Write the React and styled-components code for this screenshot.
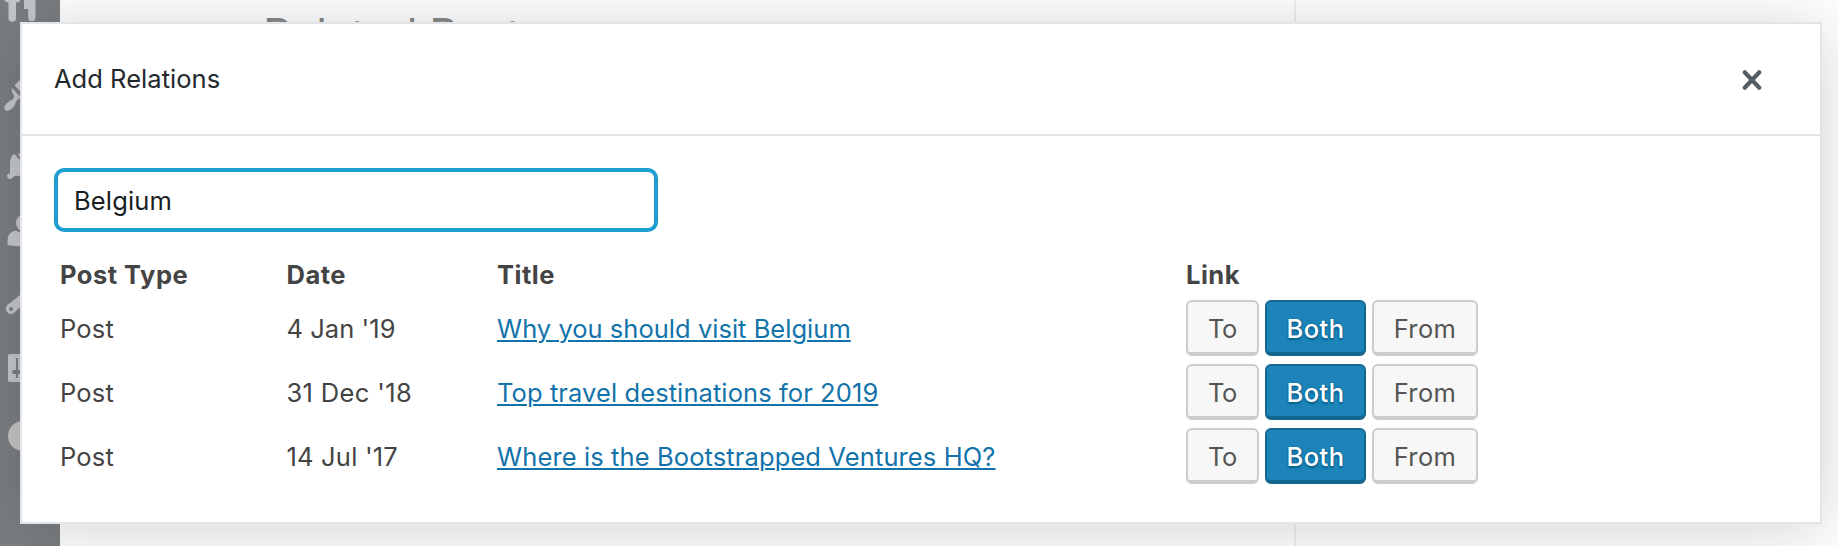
import React from "react";
import styled, { createGlobalStyle } from "styled-components";

const GlobalStyle = createGlobalStyle`
  *, *::before, *::after { box-sizing: border-box; }
  body {
    margin: 0;
    overflow: hidden;
    background: #fff;
    color: #444;
    font-family: Inter, "Liberation Sans", sans-serif;
    font-size: 25.5px;
  }
`;

const Screen = styled.div`
  position: relative;
  display: flex;
  height: 546px;
  overflow: hidden;
`;

const AdminMenu = styled.nav`
  display: flex;
  flex-direction: column;
  width: 60px;
  background: #7b7e81;
`;

const MenuIcon = styled.svg`
  display: block;
  flex: none;
  width: 40px;
  height: ${({ $height }) => $height}px;
  margin-bottom: ${({ $gap }) => $gap}px;
  fill: ${({ $tone }) => $tone || "#c4c7ca"};
`;

const Editor = styled.main`
  flex: none;
  width: 1236px;
  padding: 8px 0 0 203px;
  border-right: 2px solid #eeeff1;
`;

const MetaboxTitle = styled.h1`
  margin: 0;
  color: #878787;
  font-size: 44.5px;
  font-weight: 400;
  line-height: 54px;
  letter-spacing: -0.4px;
`;

const Modal = styled.section`
  position: absolute;
  top: 22px;
  left: 20px;
  display: flex;
  flex-direction: column;
  width: 1802px;
  height: 502px;
  border: 2px solid #e2e4e7;
  background: #fff;
  box-shadow: 0 6px 60px rgba(25, 30, 35, 0.2);
`;

const ModalHeader = styled.header`
  display: flex;
  align-items: center;
  justify-content: space-between;
  height: 112px;
  padding: 0 56px 0 32px;
  border-bottom: 2px solid #e2e4e7;
`;

const ModalTitle = styled.h2`
  margin: 0;
  padding-bottom: 2px;
  color: #23282d;
  font-size: 25.5px;
  font-weight: 400;
  letter-spacing: 0.03px;
`;

const CloseButton = styled.button`
  width: 24px;
  height: 24px;
  margin-top: 2px;
  padding: 0;
  border: 0;
  background: none;

  svg {
    display: block;
    stroke: #555d66;
    stroke-width: 4.2;
    stroke-linecap: round;
  }
`;

const ModalBody = styled.div`
  padding: 32px;
`;

const SearchInput = styled.input`
  display: block;
  width: 604px;
  height: 64px;
  margin: 0 0 20px;
  padding: 1px 16px 0;
  border: 4px solid #1f9fd0;
  border-radius: 10px;
  outline: 0;
  background: #fff;
  color: #191e23;
  font: inherit;
  letter-spacing: 0.15px;
`;

const Row = styled.div`
  display: grid;
  grid-template-columns: 226.5px 210.5px 689px auto;
  align-items: center;
  height: ${({ $head }) => ($head ? 44 : 64)}px;
  padding-left: 6px;
`;

const HeadCell = styled.div`
  padding-top: 1px;
  font-weight: 700;
  letter-spacing: 0.5px;
`;

const Cell = styled.div`
  padding-top: 1px;
  letter-spacing: ${({ $tracking = 0.2 }) => $tracking}px;
`;

const TitleLink = styled.a`
  color: #1273aa;
  letter-spacing: ${({ $tracking }) => $tracking}px;
  text-decoration: underline;
  text-decoration-thickness: 2px;
  text-underline-offset: 2px;
`;

const ButtonGroup = styled.div`
  display: flex;
  gap: 6px;
`;

const LinkButton = styled.button`
  width: ${({ $width }) => $width}px;
  height: 56px;
  padding: 3px 0 0;
  border: 2px solid ${({ $active }) => ($active ? "#13678f" : "#ccc")};
  border-bottom-width: 4px;
  border-radius: 6px;
  background: ${({ $active }) => ($active ? "#1c84b8" : "#f7f7f7")};
  color: ${({ $active }) => ($active ? "#fff" : "#555")};
  font: inherit;
  font-weight: ${({ $active }) => ($active ? 500 : 400)};
  letter-spacing: ${({ $tracking }) => $tracking}px;
  text-shadow: ${({ $active }) =>
    $active ? "0 2px 2px #0a5f8a, 0 0 2px #0a5f8a" : "none"};
`;

const posts = [
  {
    type: "Post",
    date: "4 Jan '19",
    dateTracking: 0.05,
    title: "Why you should visit Belgium",
    titleTracking: 0.02,
  },
  {
    type: "Post",
    date: "31 Dec '18",
    dateTracking: 0.35,
    title: "Top travel destinations for 2019",
    titleTracking: 0.09,
  },
  {
    type: "Post",
    date: "14 Jul '17",
    dateTracking: 0.2,
    title: "Where is the Bootstrapped Ventures HQ?",
    titleTracking: 0.11,
  },
];

function Sidebar() {
  return (
    <AdminMenu>
      <MenuIcon $height={24} $gap={56} viewBox="0 0 40 24">
        <path d="M4 0h16v1q-1 1.5-4 1.5V18a3.7 3.7 0 0 1-7.5 0V2.5Q5 2 4 0zM24 0h11.5v18a3.7 3.7 0 0 1-7.3 0V9H24z" />
      </MenuIcon>
      <MenuIcon $height={32} $gap={40} viewBox="0 0 40 32">
        <path d="M12 8l8 8.500V18q-3 1-4 4-1 4-4 6.500-4 3.500-7 1.500-2-3 1.500-6.500 2-2 5-3.500 3-1.500 2.500-4.500-3-4-2-7.500z" />
        <path d="M14.500 5.500L20 0v11z" />
      </MenuIcon>
      <MenuIcon $height={30} $gap={32} viewBox="0 0 40 30">
        <path d="M14 2q2 1 3 3l3 3v16q-5-1-7 1-1 2-3 2-3 0-3-4l3-2V11q0-6 4-9z" />
        <path d="M18 2l3-1v6z" />
      </MenuIcon>
      <MenuIcon $height={34} $gap={46} viewBox="0 0 40 34">
        <circle cx="25" cy="9" r="9" />
        <path d="M7.500 31v-4q0-9 8-10.500 3 2 8 2v13.800q-10 0-16-1.300z" />
      </MenuIcon>
      <MenuIcon $height={24} $gap={36} viewBox="0 0 40 24">
        <path fillRule="evenodd" d="M20 1v12l-5.500 5.500A5 5 0 0 1 7.500 11zM11 13a2 2 0 1 0 0 4 2 2 0 0 0 0-4z" />
      </MenuIcon>
      <MenuIcon $height={28} $gap={39} viewBox="0 0 40 28">
        <path fillRule="evenodd" d="M10 0h10v16h-2V4h-2v12h-2q-2 0-2 2t2 2h2v4h2v-4h2v8H10q-2 0-2-2V2q0-2 2-2z" />
      </MenuIcon>
      <MenuIcon $height={30} $gap={0} $tone="#c5c5c4" viewBox="0 0 40 30">
        <circle cx="23" cy="15" r="15" />
      </MenuIcon>
    </AdminMenu>
  );
}

export default function App() {
  return (
    <>
      <GlobalStyle />
      <Screen>
        <Sidebar />
        <Editor>
          <MetaboxTitle>Related Posts</MetaboxTitle>
        </Editor>
        <Modal>
          <ModalHeader>
            <ModalTitle>Add Relations</ModalTitle>
            <CloseButton aria-label="Close">
              <svg width="24" height="24" viewBox="0 0 24 24">
                <path d="M4.700 4.200l14.600 15.600M19.300 4.200L4.700 19.800" />
              </svg>
            </CloseButton>
          </ModalHeader>
          <ModalBody>
            <SearchInput defaultValue="Belgium" />
            <Row $head>
              <HeadCell>Post Type</HeadCell>
              <HeadCell>Date</HeadCell>
              <HeadCell>Title</HeadCell>
              <HeadCell>Link</HeadCell>
            </Row>
            {posts.map((post) => (
              <Row key={post.title}>
                <Cell>{post.type}</Cell>
                <Cell $tracking={post.dateTracking}>{post.date}</Cell>
                <Cell>
                  <TitleLink $tracking={post.titleTracking}>{post.title}</TitleLink>
                </Cell>
                <ButtonGroup>
                  <LinkButton $width={73} $tracking={-0.5}>To</LinkButton>
                  <LinkButton $width={101} $tracking={0.5} $active>Both</LinkButton>
                  <LinkButton $width={106} $tracking={0.4}>From</LinkButton>
                </ButtonGroup>
              </Row>
            ))}
          </ModalBody>
        </Modal>
      </Screen>
    </>
  );
}
